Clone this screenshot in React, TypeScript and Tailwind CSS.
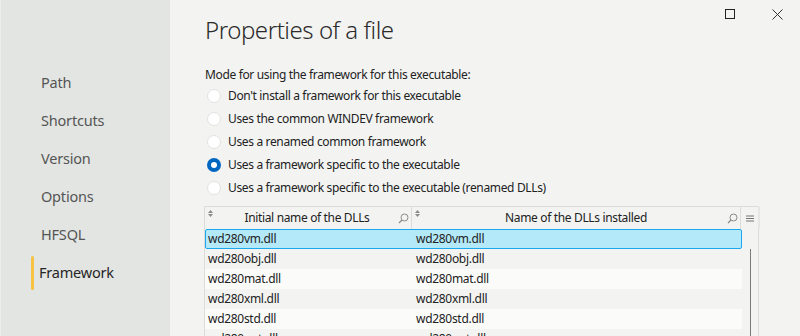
import React from "react";

const nav = ["Path", "Shortcuts", "Version", "Options", "HFSQL", "Framework"];
const radios = [
  "Don't install a framework for this executable",
  "Uses the common WINDEV framework",
  "Uses a renamed common framework",
  "Uses a framework specific to the executable",
  "Uses a framework specific to the executable (renamed DLLs)",
];
const rows = ["wd280vm.dll", "wd280obj.dll", "wd280mat.dll", "wd280xml.dll", "wd280std.dll", "wd280pnt.dll"];

function SortIcon() {
  return (
    <svg width="5" height="7" viewBox="0 0 5 7" className="absolute left-[3px] top-[3px]">
      <path d="M2.5 0 L5 3 L0 3 Z" fill="#8a8a8a" />
      <path d="M2.5 7 L5 4 L0 4 Z" fill="#8a8a8a" />
    </svg>
  );
}

function SearchIcon() {
  return (
    <svg width="11" height="11" viewBox="0 0 11 11" className="absolute right-[2px] top-[6px]">
      <circle cx="6.5" cy="4.5" r="3.5" fill="none" stroke="#8a8a8a" strokeWidth="1" />
      <path d="M4 7 L1 10" stroke="#8a8a8a" strokeWidth="1.2" />
    </svg>
  );
}

export default function App() {
  return (
    <div className="w-[800px] h-[336px] flex bg-[#f3f4f2] overflow-hidden font-['Noto_Sans',sans-serif] text-[#1f1f1f]">
      <aside className="w-[170px] shrink-0 bg-[#e3e5e2] border-l border-[#eceeeb] pt-[64px]">
        {nav.map((n) => {
          const active = n === "Framework";
          return (
            <div key={n} className="h-[38px] flex items-center pl-[30px]">
              <div className={`w-[3px] h-[34px] rounded-full ${active ? "bg-[#f6c343]" : "bg-transparent"}`} />
              <span className={`text-[14.5px] tracking-[-0.2px] ${active ? "ml-[5px] text-[#262626]" : "ml-[7px] text-[#555]"}`}>{n}</span>
            </div>
          );
        })}
      </aside>
      <main className="flex-1 relative pl-[35px]">
        <div className="absolute top-[9px] left-[555px] w-[10px] h-[10px] border border-[#222]" />
        <svg width="11" height="11" viewBox="0 0 11 11" className="absolute top-[9px] left-[602px]">
          <path d="M0.5 0.5 L10.5 10.5 M10.5 0.5 L0.5 10.5" stroke="#333" strokeWidth="1" />
        </svg>
        <h1 className="mt-[13px] h-[34px] text-[24px] tracking-[-0.45px] leading-[34px] font-light text-[#2b2b2b]">Properties of a file</h1>
        <div className="mt-[19px] h-[18px] text-[12px] tracking-[-0.35px] leading-[18px] text-[#222]">Mode for using the framework for this executable:</div>
        <div className="flex flex-col">
          {radios.map((r, i) => {
            const sel = i === 3;
            return (
              <div key={r} className="h-[23px] flex items-center pl-[2px]">
                {sel ? (
                  <div className="w-[14px] h-[14px] rounded-full bg-[#0067c0] flex items-center justify-center">
                    <div className="w-[6px] h-[6px] rounded-full bg-white" />
                  </div>
                ) : (
                  <div className="w-[14px] h-[14px] rounded-full bg-white border border-[#e2e2e2]" />
                )}
                <span className="ml-[7px] text-[12px] tracking-[-0.35px] text-[#222]">{r}</span>
              </div>
            );
          })}
        </div>
        <div className="mt-[7px] -ml-[1px] w-[555px] border-t border-l border-r border-[#dcdddb] flex">
          <div className="w-[537px]">
            <div className="h-[22px] flex text-[12px] tracking-[-0.35px] text-[#222]">
              <div className="relative w-[207px] border-r border-[#dcdddb] flex items-center justify-center pr-[2px]">
                <SortIcon />
                <span>Initial name of the DLLs</span>
                <SearchIcon />
              </div>
              <div className="relative w-[329px] border-r border-[#dcdddb] flex items-center justify-center">
                <SortIcon />
                <span>Name of the DLLs installed</span>
                <SearchIcon />
              </div>
            </div>
            <div className="flex flex-col text-[12px] tracking-[-0.3px] text-[#222]">
              {rows.map((r, i) => (
                <div
                  key={r}
                  className={`h-[20px] flex items-center ${
                    i === 0
                      ? "bg-[#b4e9f9] border border-[#1ba7ec] rounded-[2px]"
                      : i % 2 === 0
                      ? "bg-[#fbfcfa]"
                      : ""
                  }`}
                >
                  <span className={`w-[208px] ${i === 0 ? "pl-[2px]" : "pl-[3px]"}`}>{r}</span>
                  <span className={i === 0 ? "pl-[2px]" : "pl-[3px]"}>{r}</span>
                </div>
              ))}
            </div>
          </div>
          <div className="w-[16px] flex flex-col items-center">
            <div className="h-[22px] w-full flex items-center justify-center relative">
              <svg width="8" height="7" viewBox="0 0 8 7">
                <path d="M0 1 H8 M0 3.5 H8 M0 6 H8" stroke="#777" strokeWidth="1" />
              </svg>
              <div className="absolute right-[-2px] top-0 w-[2px] h-[22px] bg-[#e6e7e5]" />
            </div>
            <div className="mt-[20px] w-[1px] h-[100px] bg-[#7a7a7a]" />
          </div>
        </div>
      </main>
    </div>
  );
}
